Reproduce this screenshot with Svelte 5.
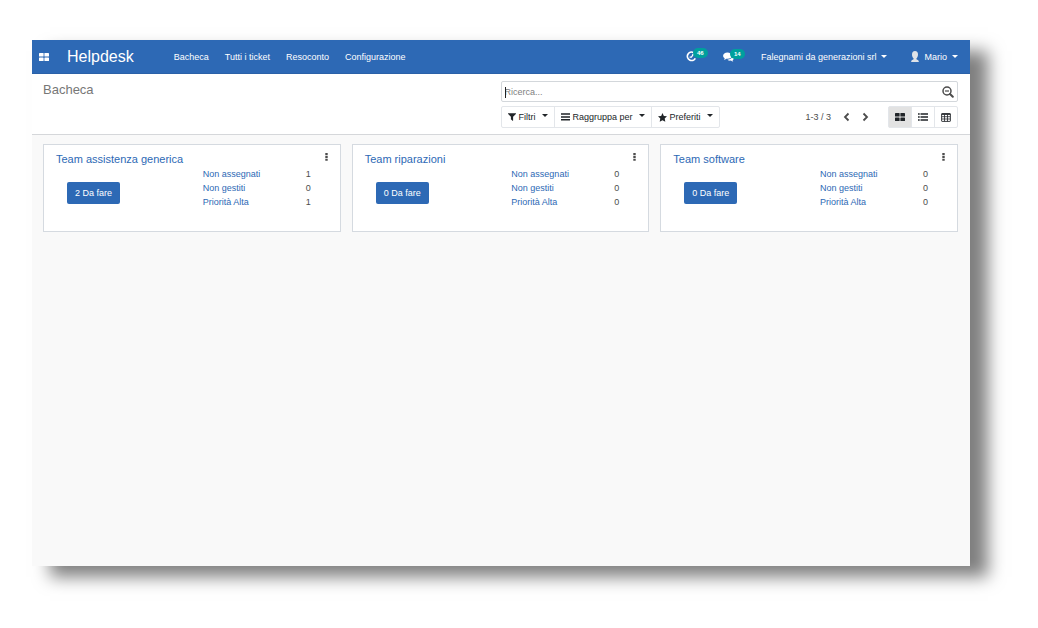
<script lang="ts">
	type Team = {
		name: string;
		todo: number;
		stats: { label: string; value: number }[];
	};

	const menus = ['Bacheca', 'Tutti i ticket', 'Resoconto', 'Configurazione'];

	const makeStats = (unassigned: number, unhandled: number, high: number) => [
		{ label: 'Non assegnati', value: unassigned },
		{ label: 'Non gestiti', value: unhandled },
		{ label: 'Priorità Alta', value: high }
	];

	const teams: Team[] = [
		{ name: 'Team assistenza generica', todo: 2, stats: makeStats(1, 0, 1) },
		{ name: 'Team riparazioni', todo: 0, stats: makeStats(0, 0, 0) },
		{ name: 'Team software', todo: 0, stats: makeStats(0, 0, 0) }
	];

	let query = $state('');
	let view = $state('kanban');
</script>

{#snippet grid()}
	<svg width="10" height="8" viewBox="0 0 10 8" fill="currentColor" aria-hidden="true">
		<rect width="4.6" height="3.6" rx=".6" />
		<rect x="5.4" width="4.6" height="3.6" rx=".6" />
		<rect y="4.4" width="4.6" height="3.6" rx=".6" />
		<rect x="5.4" y="4.4" width="4.6" height="3.6" rx=".6" />
	</svg>
{/snippet}

<div class="window">
	<header class="navbar">
		<button class="apps" aria-label="Applicazioni">{@render grid()}</button>
		<a class="brand" href="#helpdesk">Helpdesk</a>
		<nav class="menus">
			{#each menus as menu}
				<a href="#menu">{menu}</a>
			{/each}
		</nav>
		<div class="systray">
			<button class="tray activity" aria-label="Attività">
				<svg width="11" height="11" viewBox="0 0 11 11" fill="none" stroke="currentColor" aria-hidden="true">
					<path d="M7.4 1.500A4.200 4.200 0 1 0 9.300 7.300" stroke-width="1.700" />
					<path d="M7.800 2.600L5.400 6.200H3.600" stroke-width="1.200" />
					<path d="M5.800 3.700H9V.8z" fill="currentColor" stroke="none" />
				</svg>
				<span class="badge">46</span>
			</button>
			<button class="tray messages" aria-label="Messaggi">
				<svg width="11" height="10" viewBox="0 0 11 10" fill="currentColor" aria-hidden="true">
					<path d="M4.400.5C2 .5.1 1.900.1 3.800c0 1 .6 1.900 1.600 2.500-.1.600-.4 1-.8 1.400 1 0 1.800-.4 2.400-.9 3.200.4 5.600-1 5.600-3C8.900 1.900 6.800.5 4.400.5z" />
					<path d="M9.500 3.800c0 2.300-2.100 3.900-5.100 3.900.8.7 2 1.100 3.500.9.600.5 1.400.9 2.500.9-.4-.4-.7-.8-.8-1.300 1.700-1 1.800-3.300-.1-4.400z" />
				</svg>
				<span class="badge">14</span>
			</button>
			<button class="dropdown company">Falegnami da generazioni srl <i class="caret"></i></button>
			<button class="dropdown user">
				<svg width="8" height="11" viewBox="0 0 8 11" fill="#dfe3e8" aria-hidden="true">
					<path d="M4 .1C2 .1 1 1.500 1 3.600c0 1.700.6 3.200 1.600 3.900v.7C1.500 8.700.3 9.100.1 10.900h7.800C7.700 9.100 6.500 8.700 5.400 8.200v-.7C6.400 6.800 7 5.300 7 3.600 7 1.500 6 .1 4 .1z" />
				</svg>
				Mario <i class="caret"></i>
			</button>
		</div>
	</header>

	<section class="control-panel">
		<h1>Bacheca</h1>
		<div class="controls">
			<div class="search">
				<input type="text" placeholder="Ricerca..." aria-label="Ricerca" bind:value={query} />
				<span class="cursor"></span>
				<button aria-label="Opzioni di ricerca">
					<svg width="12" height="12" viewBox="0 0 12 12" fill="none" stroke="currentColor" aria-hidden="true">
						<circle cx="5" cy="5" r="4" stroke-width="1.500" />
						<path d="M3 5h4" stroke-width="1.200" />
						<path d="M8 8l2.800 2.800" stroke-width="2" stroke-linecap="round" />
					</svg>
				</button>
			</div>
			<div class="toolbar">
				<div class="filters">
					<button>
						<svg width="8" height="8" viewBox="0 0 8 8" fill="currentColor" aria-hidden="true">
							<path d="M.4.3h7.200c.4 0 .5.4.3.600L5.100 3.700v3.900c0 .3-.3.4-.500.2L3.100 6.500c-.1-.1-.2-.2-.2-.3V3.700L.1.900C-.1.700 0 .3.400.3z" />
						</svg>
						Filtri <i class="caret"></i>
					</button>
					<button>
						<svg width="9" height="8" viewBox="0 0 9 8" fill="currentColor" aria-hidden="true">
							<path d="M0 .3h9v1.500H0zM0 3.200h9v1.500H0zM0 6.100h9v1.500H0z" />
						</svg>
						Raggruppa per <i class="caret"></i>
					</button>
					<button>
						<svg width="9" height="9" viewBox="0 0 9 9" fill="currentColor" aria-hidden="true">
							<path d="M4.500.1l1.350 2.800L9 3.300 6.700 5.500l.6 3.200-2.800-1.500-2.800 1.500.6-3.200L0 3.300l3.150-.4z" />
						</svg>
						Preferiti <i class="caret"></i>
					</button>
				</div>
				<div class="pager">
					<span>1-3 / 3</span>
					<button aria-label="Precedente">
						<svg width="7" height="10" viewBox="0 0 7 10" fill="none" stroke="currentColor" stroke-width="1.800" aria-hidden="true">
							<path d="M5.500 1.500L2 5l3.500 3.500" />
						</svg>
					</button>
					<button aria-label="Successivo">
						<svg width="7" height="10" viewBox="0 0 7 10" fill="none" stroke="currentColor" stroke-width="1.800" aria-hidden="true">
							<path d="M1.500 1.500L5 5 1.500 8.500" />
						</svg>
					</button>
				</div>
				<div class="views">
					<button class:active={view === 'kanban'} aria-label="Kanban" onclick={() => (view = 'kanban')}>
						{@render grid()}
					</button>
					<button class:active={view === 'list'} aria-label="Elenco" onclick={() => (view = 'list')}>
						<svg width="10" height="8" viewBox="0 0 10 8" fill="currentColor" aria-hidden="true">
							<path d="M0 .2h1.700v1.500H0zM2.500.2H10v1.500H2.500zM0 3.200h1.700v1.500H0zM2.500 3.200H10v1.500H2.500zM0 6.200h1.700v1.500H0zM2.500 6.200H10v1.500H2.500z" />
						</svg>
					</button>
					<button class:active={view === 'pivot'} aria-label="Tabella" onclick={() => (view = 'pivot')}>
						<svg width="10" height="9" viewBox="0 0 10 9" fill="none" stroke="currentColor" aria-hidden="true">
							<rect x=".6" y=".6" width="8.800" height="7.800" rx=".5" stroke-width=".9" />
							<path d="M.6 1.200h8.800" stroke-width="1.300" />
							<path d="M1 3.700h8M1 6h8M3.500 1.500v6.800M6.500 1.500v6.800" stroke-width=".8" />
						</svg>
					</button>
				</div>
			</div>
		</div>
	</section>

	<main class="board">
		{#each teams as team}
			<article class="card">
				<div class="card-head">
					<h2><a href="#team">{team.name}</a></h2>
					<button class="more" aria-label="Menu {team.name}">
						<svg width="3" height="8" viewBox="0 0 3 8" fill="currentColor" aria-hidden="true">
							<path d="M.3.1h2.400v2.100H.3zM.3 2.900h2.400V5H.3zM.3 5.700h2.400v2.100H.3z" />
						</svg>
					</button>
				</div>
				<div class="card-body">
					<div class="action">
						<button class="todo">{team.todo} Da fare</button>
					</div>
					<table>
						<tbody>
							{#each team.stats as stat}
								<tr>
									<th scope="row"><a href="#tickets">{stat.label}</a></th>
									<td>{stat.value}</td>
								</tr>
							{/each}
						</tbody>
					</table>
				</div>
			</article>
		{/each}
	</main>
</div>

<style>
	:global(body) {
		margin: 0;
		background: #fff;
	}
	.window {
		box-sizing: border-box;
		display: flex;
		flex-direction: column;
		min-height: calc(100vh - 102px);
		margin: 40px 68px 62px 32px;
		background: #f9f9f9;
		color: #4c4c4c;
		font-family: 'Liberation Sans', Arial, sans-serif;
		font-size: 9px;
		line-height: 14px;
		box-shadow: 18px 11px 16px rgba(0, 0, 0, 0.5);
	}
	button,
	input {
		margin: 0;
		padding: 0;
		border: 0;
		background: none;
		color: inherit;
		font: inherit;
	}
	button {
		cursor: pointer;
	}
	a {
		color: #2d69b5;
		text-decoration: none;
	}
	svg {
		display: block;
		flex: none;
	}
	.caret {
		border: 3px solid transparent;
		border-top-color: currentColor;
		border-bottom: 0;
	}

	.navbar {
		display: flex;
		align-items: center;
		box-sizing: border-box;
		height: 34px;
		padding: 0 12px 0 7px;
		border-bottom: 1px solid #2a61a8;
		background: #2d69b5;
		color: #fff;
	}
	.navbar a {
		color: #fff;
	}
	.brand {
		margin: 0 40px 0 18px;
		font-size: 16px;
		line-height: 20px;
	}
	.menus {
		display: flex;
		gap: 16px;
	}
	.systray {
		display: flex;
		align-items: center;
		margin-left: auto;
	}
	.tray {
		position: relative;
	}
	.activity {
		margin-right: 26px;
	}
	.messages {
		margin-right: 27px;
	}
	.badge {
		position: absolute;
		left: 7px;
		top: -3px;
		padding: 0 4px;
		border-radius: 5px;
		background: #00a09d;
		font-size: 6px;
		font-weight: bold;
		line-height: 10px;
	}
	.dropdown {
		display: flex;
		align-items: center;
		gap: 5px;
	}
	.company {
		margin-right: 24px;
	}

	.control-panel {
		display: grid;
		grid-template-columns: 1fr 1fr;
		padding: 7px 12px 6px 11px;
		border-bottom: 1px solid #d5d7da;
		background: #fff;
	}
	h1 {
		margin: 0;
		color: #777;
		font-size: 13px;
		font-weight: normal;
		line-height: 18px;
	}
	.search {
		position: relative;
		display: flex;
		align-items: center;
		height: 19px;
		padding: 0 3px;
		border: 1px solid #d3d7db;
		border-radius: 2px;
	}
	.search input {
		flex: 1;
		min-width: 0;
		outline: none;
	}
	.search input::placeholder {
		color: #808080;
		opacity: 1;
	}
	.cursor {
		position: absolute;
		left: 3px;
		top: 5px;
		width: 1px;
		height: 11px;
		background: #222;
	}
	.toolbar {
		display: flex;
		align-items: center;
		margin-top: 4px;
	}
	.filters {
		display: flex;
		margin-right: auto;
		color: #212529;
	}
	.filters button {
		display: flex;
		align-items: center;
		gap: 3px;
		height: 22px;
		padding: 0 6px;
		border: 1px solid #e3e6ea;
		white-space: nowrap;
	}
	.filters button + button,
	.views button + button {
		margin-left: -1px;
	}
	.filters button:first-child,
	.views button:first-child {
		border-radius: 2px 0 0 2px;
	}
	.filters button:last-child,
	.views button:last-child {
		border-radius: 0 2px 2px 0;
	}
	.filters .caret {
		margin: 0 0 3px 3px;
	}
	.pager {
		display: flex;
		align-items: center;
		gap: 12px;
		margin-right: 19px;
	}
	.views {
		display: flex;
		color: #212529;
	}
	.views button {
		display: grid;
		place-items: center;
		box-sizing: border-box;
		width: 24px;
		height: 22px;
		border: 1px solid #e3e6ea;
	}
	.views .active {
		background: #e2e2e2;
	}

	.board {
		display: grid;
		grid-template-columns: repeat(3, 1fr);
		gap: 11px;
		padding: 9px 12px 9px 11px;
	}
	.card {
		min-height: 72px;
		padding: 7px 12px;
		border: 1px solid #d5dae0;
		background: #fff;
	}
	.card-head {
		display: flex;
		justify-content: space-between;
	}
	h2 {
		margin: 0;
		font-size: 11px;
		font-weight: normal;
		line-height: 15px;
	}
	.more {
		align-self: flex-start;
		padding: 1px 0;
	}
	.card-body {
		display: grid;
		grid-template-columns: 54% 1fr;
	}
	.action {
		padding: 15px 11px 0;
	}
	.todo {
		height: 22px;
		padding: 0 8px;
		border-radius: 2px;
		background: #2d69b5;
		color: #fff;
	}
	table {
		align-self: start;
		width: 100%;
		border-collapse: collapse;
	}
	th,
	td {
		padding: 0;
		font-weight: normal;
		text-align: left;
	}
	td {
		width: 22px;
	}
</style>
